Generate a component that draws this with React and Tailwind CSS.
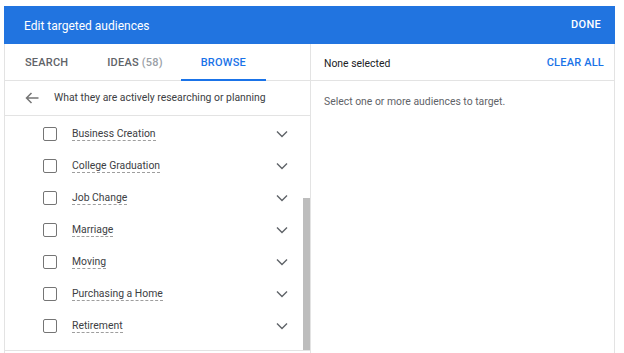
import React from "react";

const ITEMS = [
  "Business Creation",
  "College Graduation",
  "Job Change",
  "Marriage",
  "Moving",
  "Purchasing a Home",
  "Retirement",
];

function Chevron() {
  return (
    <svg width="12" height="8" viewBox="0 0 12 8" fill="none">
      <path d="M1 1.5l5 5 5-5" stroke="#5f6368" strokeWidth="1.4" />
    </svg>
  );
}

function BackArrow() {
  return (
    <svg width="14" height="12" viewBox="0 0 14 12" fill="none">
      <path d="M13.5 6H1.5M6.5 1L1.5 6l5 5" stroke="#757575" strokeWidth="1.5" />
    </svg>
  );
}

function Row({ label }) {
  return (
    <div className="flex h-8 items-center pl-[38px] pr-[15px]">
      <div className="h-[14px] w-[14px] rounded-[2px] border-[1.5px] border-[#757575]" />
      <span className="ml-[15px] border-b border-dashed border-[#9e9e9e] text-[10.4px] leading-[13px] text-[#3c4043]">
        {label}
      </span>
      <div className="ml-auto flex items-center">
        <Chevron />
      </div>
    </div>
  );
}

export default function App() {
  return (
    <div
      className="h-[353px] w-[624px] overflow-hidden bg-white pl-1 pt-[6px]"
      style={{ fontFamily: "Roboto, 'Liberation Sans', sans-serif" }}
    >
      <div className="w-[611px]">
        {/* header */}
        <div className="flex h-[38px] items-center justify-between bg-[#2174e0] pl-5 pr-[14px] pt-px text-white">
          <span className="text-[12px]">Edit targeted audiences</span>
          <span className="text-[11px] font-medium tracking-[0.3px]">DONE</span>
        </div>

        <div className="flex h-[309px] border-x border-[#e3e3e3]">
          {/* left panel */}
          <div className="flex w-[306px] flex-col border-r border-[#e3e3e3]">
            <div className="flex h-[37px] items-stretch border-b border-[#e3e3e3] text-[11px] font-medium tracking-[0.2px]">
              <div className="flex items-center px-5 pt-[3px] text-[#5f6368]">SEARCH</div>
              <div className="flex items-center pl-[19px] pr-[18px] pt-[3px] text-[#5f6368]">
                IDEAS<span className="ml-[3px] text-[#9aa0a6]">(58)</span>
              </div>
              <div className="relative flex items-center px-5 pt-[3px] text-[#1a73e8]">
                BROWSE
                <div className="absolute bottom-[-1px] left-0 right-0 h-[2px] bg-[#1a73e8]" />
              </div>
            </div>
            <div className="flex h-[35px] items-center border-b border-[#e3e3e3] pl-5">
              <BackArrow />
              <span className="ml-[15px] text-[10.4px] text-[#3c4043]">
                What they are actively researching or planning
              </span>
            </div>
            <div className="flex flex-1">
              <div className="flex-1 pt-[2px]">
                {ITEMS.map((it) => (
                  <Row key={it} label={it} />
                ))}
              </div>
              <div className="flex w-[7px] flex-col">
                <div className="h-[82px]" />
                <div className="h-[152px] bg-[#bdbdbd]" />
              </div>
            </div>
            <div className="h-[3px] border-t border-[#e3e3e3]" />
          </div>

          {/* right panel */}
          <div className="flex flex-1 flex-col">
            <div className="flex h-[37px] items-center justify-between border-b border-[#e3e3e3] pl-[13px] pr-[10px] pt-[3px]">
              <span className="text-[10.4px] text-[#202124]">None selected</span>
              <span className="text-[11px] font-medium tracking-[0.2px] text-[#1a73e8]">CLEAR ALL</span>
            </div>
            <div className="pl-[13px] pt-[13px] text-[10.4px] text-[#5f6368]">
              Select one or more audiences to target.
            </div>
          </div>
        </div>
      </div>
    </div>
  );
}
